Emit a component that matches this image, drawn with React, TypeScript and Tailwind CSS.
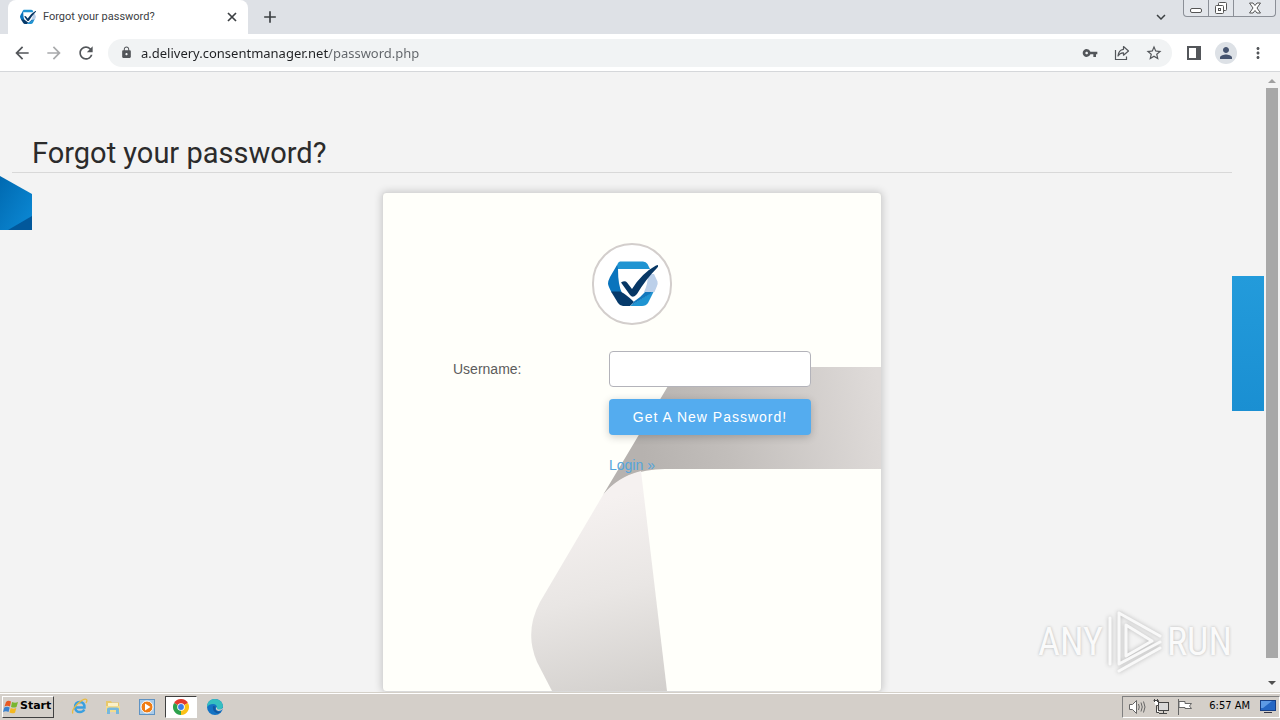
import { ReactNode } from "react";
import {
  MdArrowBack,
  MdArrowForward,
  MdRefresh,
  MdLock,
  MdVpnKey,
  MdStarBorder,
  MdMoreVert,
  MdAdd,
  MdPerson,
  MdKeyboardArrowDown,
} from "react-icons/md";

function Logo({ className }: { className: string }) {
  return (
    <svg viewBox="0 0 50 46" className={className} aria-hidden="true">
      <path d="M12 0.500H35Q38 0.500 39.500 3L42 8H8L9.500 3Q10.500 0.500 12 0.500Z" fill="#1f94d2" />
      <path d="M9 4L10 8Q10 24 14 32L4 32Q0 25 0 22.500Q0 20 2 16Z" fill="#0a74bd" />
      <path d="M3 30.500H12Q18 33 26 41L22 45H15Q12 45 10 42Z" fill="#063a6b" />
      <path d="M46 30L22 45H34Q38 45 40 42Z" fill="#1f94d2" />
      <path d="M23 44.500L26 40.500Q32 37 37 31L47 29L42 33Z" fill="#1378bd" />
      <path d="M40 13L46 13L49.500 20.500Q50 23 49 25L46.500 31L36 31Q40 23 40 13Z" fill="#bcd0ea" />
      <path d="M13 21.500Q17 19 19 21.500L24 28Q34 12 48 4.500L50 4Q51 5 49 7Q38 18 29 33Q25 38 22 34Z" fill="#073765" />
    </svg>
  );
}

function IconButton({ label, className = "", children }: { label: string; className?: string; children: ReactNode }) {
  return (
    <button type="button" aria-label={label} className={`flex h-8 w-8 shrink-0 items-center justify-center text-[#53565a] ${className}`}>
      {children}
    </button>
  );
}

function TabStrip() {
  return (
    <div className="flex h-[34px] shrink-0 items-start bg-[#dee1e6] pl-2">
      <div className="flex h-[34px] w-60 items-center rounded-t-lg bg-white pr-2 pl-3">
        <Logo className="h-4 w-4" />
        <span className="ml-[7px] flex-1 font-['Roboto',sans-serif] text-[11px] whitespace-nowrap text-[#3c4043]">Forgot your password?</span>
        <button type="button" aria-label="Close tab" className="flex h-4 w-4 items-center justify-center text-[#3c4043]">
          <svg width="10" height="10" viewBox="0 0 10 10" stroke="currentColor" strokeWidth="1.700">
            <path d="M1 1L9 9M9 1L1 9" />
          </svg>
        </button>
      </div>
      <button type="button" aria-label="New tab" className="ml-3 flex h-[34px] w-5 items-center justify-center text-[#3c4043]">
        <MdAdd size={20} />
      </button>
      <div className="flex-1" />
      <button type="button" aria-label="Search tabs" className="mr-3 flex h-[34px] w-5 items-center justify-center text-[#3c4043]">
        <MdKeyboardArrowDown size={18} />
      </button>
      <div className="mr-1 flex h-[17px] rounded-b border border-t-0 border-[#8b8f97] bg-[#e3e6eb] text-[#555]">
        <button type="button" aria-label="Minimize" className="flex w-[25px] items-center justify-center border-r border-[#8b8f97]">
          <svg width="12" height="14" viewBox="0 0 12 14" fill="#fff" stroke="currentColor">
            <rect x=".5" y="7.500" width="11" height="4" rx="1.500" />
          </svg>
        </button>
        <button type="button" aria-label="Restore" className="flex w-[25px] items-center justify-center border-r border-[#8b8f97]">
          <svg width="14" height="14" viewBox="0 0 14 14" fill="#fff" stroke="currentColor">
            <rect x="4.500" y="1.500" width="8" height="8" rx="1" />
            <rect x="1.500" y="4.500" width="8" height="8" rx="1" />
            <rect x="4.500" y="7.500" width="2" height="2" />
          </svg>
        </button>
        <button type="button" aria-label="Close" className="flex w-[41px] items-center justify-center">
          <svg width="12" height="12" viewBox="0 0 12 12" fill="#fff" stroke="currentColor">
            <path d="M.5 1H4L6 3.500L8 1H11.500L8 6L11.500 11H8L6 8.500L4 11H.5L4 6Z" />
          </svg>
        </button>
      </div>
    </div>
  );
}

function Toolbar() {
  return (
    <div className="flex h-[38px] shrink-0 items-center border-b border-[#d5d7da] bg-white px-1.5">
      <IconButton label="Back"><MdArrowBack size={20} /></IconButton>
      <IconButton label="Forward" className="opacity-50"><MdArrowForward size={20} /></IconButton>
      <IconButton label="Reload"><MdRefresh size={20} /></IconButton>
      <div className="ml-1.5 flex h-7 flex-1 items-center rounded-full bg-[#f1f3f4] pr-0.5 pl-3">
        <MdLock size={13} className="shrink-0 text-[#53565a]" />
        <input
          aria-label="Address"
          className="ml-2 h-7 min-w-0 flex-1 bg-[linear-gradient(90deg,#202124_187px,#5f6368_187px)] bg-clip-text font-['Noto_Sans',sans-serif] text-[13px] text-transparent outline-none"
          defaultValue="a.delivery.consentmanager.net/password.php"
        />
        <IconButton label="Passwords"><MdVpnKey size={16} /></IconButton>
        <IconButton label="Share">
          <svg width="16" height="16" viewBox="0 0 16 16" fill="none" stroke="currentColor" strokeWidth="1.200">
            <path d="M1.500 5V14.500H12.500V11.500" />
            <path d="M9.500 1.500L14.500 6L9.500 10.200V7.800Q6 7.500 4 11Q4.500 5 9.500 4.300Z" strokeLinejoin="round" />
          </svg>
        </IconButton>
        <IconButton label="Bookmark"><MdStarBorder size={18} /></IconButton>
      </div>
      <IconButton label="Side panel" className="ml-1.5">
        <svg width="16" height="16" viewBox="0 0 16 16">
          <path d="M1 1H15V15H1ZM3 3V13H10V3Z" fill="currentColor" fillRule="evenodd" />
        </svg>
      </IconButton>
      <IconButton label="Profile">
        <span className="flex h-[22px] w-[22px] items-center justify-center rounded-full bg-[#dde1e6] text-[#46546f]">
          <MdPerson size={18} />
        </span>
      </IconButton>
      <IconButton label="Menu"><MdMoreVert size={18} /></IconButton>
    </div>
  );
}

function CardArt() {
  return (
    <svg viewBox="383 193 498 498" className="absolute inset-0 h-full w-full" aria-hidden="true">
      <defs>
        <linearGradient id="band" x1="640" y1="440" x2="881" y2="400" gradientUnits="userSpaceOnUse">
          <stop offset="0" stopColor="#b6b2af" />
          <stop offset=".35" stopColor="#c2bebb" />
          <stop offset="1" stopColor="#dfdbd9" />
        </linearGradient>
        <linearGradient id="leg" x1="600" y1="500" x2="650" y2="700" gradientUnits="userSpaceOnUse">
          <stop offset="0" stopColor="#f5f1f0" />
          <stop offset=".45" stopColor="#e9e6e4" />
          <stop offset="1" stopColor="#d1cecb" />
        </linearGradient>
      </defs>
      <path d="M881 367H700Q679 367 668 386L603 495Q625 469 665 469H881Z" fill="url(#band)" />
      <path d="M641 471Q617 477 603 495L540 602Q524 632 537 662L552 691H667Z" fill="url(#leg)" />
    </svg>
  );
}

function PasswordCard() {
  return (
    <section className="relative mx-auto mt-[19px] h-[500px] w-full max-w-[500px] shrink-0 overflow-hidden rounded border border-[#d9d9d9] bg-[#fffffa] shadow-[0_0_8px_rgba(0,0,0,0.2)]">
      <CardArt />
      <div className="relative flex flex-col px-[70px] pt-[50px]">
        <div className="mx-auto flex h-[82px] w-20 items-center justify-center rounded-full border-2 border-[#d3cecc] bg-white pl-0.5">
          <Logo className="h-[46px] w-[50px]" />
        </div>
        <form className="mt-[26px] grid grid-cols-[156px_1fr] items-center gap-y-3 font-['Liberation_Sans',sans-serif] text-[14px]" onSubmit={(e) => e.preventDefault()}>
          <label htmlFor="username" className="text-[#5c5c5c]">Username:</label>
          <input id="username" className="h-9 w-full rounded border border-[#b3b3ba] bg-white px-2 outline-none" />
          <button type="submit" className="col-start-2 h-9 rounded bg-[#54acef] tracking-[1px] whitespace-nowrap text-white shadow-[0_2px_8px_rgba(0,0,0,0.2)]">
            Get A New Password!
          </button>
          <a href="#login" className="col-start-2 mt-2 leading-5 text-[#54a5dd]">Login »</a>
        </form>
      </div>
    </section>
  );
}

function Watermark() {
  return (
    <div className="absolute right-12 bottom-[18px] flex items-center font-['Roboto_Condensed','Liberation_Sans_Narrow',sans-serif] text-[38px] leading-none text-[#fafafa] [text-shadow:0_0_3px_#b5b5b5]">
      <span>ANY</span>
      <svg width="56" height="64" viewBox="0 0 56 64" fill="none" className="mx-1 drop-shadow-[0_0_2px_#b5b5b5]">
        <path d="M3 8V54" stroke="#fafafa" strokeWidth="3" strokeLinecap="round" />
        <path d="M12 3V54L53 32M12 3L53 26M12 61L53 38M19 15V46L45 31Z" stroke="#f9f9f9" strokeWidth="3" strokeLinecap="round" strokeLinejoin="round" />
      </svg>
      <span>RUN</span>
    </div>
  );
}

function Page() {
  return (
    <div className="flex min-h-0 flex-1 bg-[#f3f3f3]">
      <main className="relative flex min-w-0 flex-1 flex-col overflow-hidden">
        <h1 className="mr-8 ml-3 border-b border-[#d8d8d8] pt-[62px] pl-5 font-['Roboto',sans-serif] text-[29px] leading-[38px] text-[#2b2b2b]">
          Forgot your password?
        </h1>
        <PasswordCard />
        <svg width="32" height="54" viewBox="0 0 32 54" className="absolute top-[104px] left-0" aria-hidden="true">
          <defs>
            <linearGradient id="edge" x1="0" y1="0" x2="1" y2="1">
              <stop offset="0" stopColor="#0069b0" />
              <stop offset="1" stopColor="#0c8ad6" />
            </linearGradient>
          </defs>
          <path d="M0 0L32 18V54H0Z" fill="url(#edge)" />
          <path d="M32 40V54H8Z" fill="#02589b" />
        </svg>
        <div className="absolute top-[204px] right-0 h-[135px] w-8 bg-linear-to-b from-[#239bdb] to-[#1a8fd2]" />
      </main>
      <div className="flex w-4 shrink-0 flex-col items-center bg-[#f3f3f3]">
        <svg width="8" height="16" viewBox="0 0 8 16" className="shrink-0"><path d="M0 11L4 7L8 11Z" fill="#a0a0a0" /></svg>
        <div className="w-3 flex-1 bg-[#a8a8a8]" />
        <svg width="8" height="34" viewBox="0 0 8 34" className="shrink-0"><path d="M0 23L4 27L8 23Z" fill="#505050" /></svg>
      </div>
    </div>
  );
}

function Taskbar() {
  return (
    <footer className="flex h-7 shrink-0 items-center border-t border-[#d4d0c8] bg-[#d4cfc9] font-['DejaVu_Sans_Condensed','DejaVu_Sans',sans-serif] text-[11px] text-black shadow-[inset_0_1px_0_#fff]">
      <button type="button" className="ml-0.5 flex h-[22px] w-[52px] items-center gap-px border border-t-white border-r-[#404040] border-b-[#404040] border-l-white text-[11px] font-bold">
        <svg width="16" height="16" viewBox="0 0 16 16" className="shrink-0">
          <path d="M3 3Q5 1 8 2.500L7 7.500Q4 6 1.500 7.500Z" fill="#e85a23" />
          <path d="M9 3Q12 4.500 15 3L13.500 8Q11 9 8 8Z" fill="#79b62f" />
          <path d="M1.300 8.500Q4 7 6.700 8.500L5.500 13Q3 11.500 0 13Z" fill="#3b82ce" />
          <path d="M7.700 9Q10.500 10.300 13.300 9L12 13.700Q9 15 6.500 13.500Z" fill="#f4b820" />
        </svg>
        <span className="font-['DejaVu_Sans',sans-serif]">Start</span>
      </button>
      <nav className="ml-[9px] flex items-center gap-0.5">
        <button type="button" aria-label="Internet Explorer" className="flex h-[22px] w-8 items-center justify-center">
          <svg width="17" height="17" viewBox="0 0 17 17" fill="none">
            <path d="M4 9.500H13.500Q13.500 4 8.800 4Q4 4.300 4 9.300Q4.500 14 9 14Q12 14 13.300 11.500" stroke="#3aa0e0" strokeWidth="2.400" />
            <path d="M2 15.500Q0 13 6 6.500Q13 0 15.500 1.500Q16.500 2.500 15 5" stroke="#e9bb40" strokeWidth="1.300" />
          </svg>
        </button>
        <button type="button" aria-label="File Explorer" className="flex h-[22px] w-8 items-center justify-center">
          <svg width="16" height="16" viewBox="0 0 16 16">
            <path d="M1 2H6L7 3.500H14V13H1Z" fill="#e8c86a" />
            <path d="M3 4H13V8H3Z" fill="#fbf1c8" />
            <path d="M1 7H15V13H1Z" fill="#f3dc8d" />
            <path d="M2 15V10Q2 8.500 4 8.500H12Q14 8.500 14 10V15H11V11H5V15Z" fill="#76b8dd" />
          </svg>
        </button>
        <button type="button" aria-label="Media Player" className="flex h-[22px] w-8 items-center justify-center">
          <svg width="16" height="16" viewBox="0 0 16 16">
            <rect x=".5" y=".5" width="15" height="15" fill="#a9cbe9" stroke="#5f93c3" />
            <circle cx="8" cy="8" r="6" fill="#f07c13" stroke="#fff" />
            <path d="M6 4.500L11.500 8L6 11.500Z" fill="#fff" />
          </svg>
        </button>
        <button type="button" aria-label="Chrome" className="flex h-[22px] w-8 items-center justify-center border border-t-[#404040] border-r-white border-b-white border-l-[#404040] bg-white">
          <svg width="16" height="16" viewBox="0 0 16 16">
            <path d="M8 8L1.070 4A8 8 0 0 1 14.930 4Z" fill="#e33b2e" />
            <path d="M8 8L14.930 4A8 8 0 0 1 8 16Z" fill="#fbc116" />
            <path d="M8 8V16A8 8 0 0 1 1.070 4Z" fill="#2da14c" />
            <circle cx="8" cy="8" r="3.800" fill="#fff" />
            <circle cx="8" cy="8" r="2.900" fill="#3b7de9" />
          </svg>
        </button>
        <button type="button" aria-label="Edge" className="flex h-[22px] w-8 items-center justify-center">
          <svg width="16" height="16" viewBox="0 0 16 16">
            <circle cx="8" cy="8" r="8" fill="#1473c4" />
            <path d="M0 7Q1 0 8 0Q15 .5 16 7Q15.500 11 11 11Q9 10.500 10 9Q10 5 6 5Q2 5 0 8Z" fill="#35bfc0" />
            <path d="M6 7Q5 12 9.500 14Q12 15 14.500 12.500Q11 13.500 9 11.500Q7.500 10 8.500 7.500Z" fill="#1257a0" />
            <path d="M9 8.500Q8.500 11.500 11.500 12Q14 12 16 10V9Q14 11 11 10.500Q9.500 10 10 8.500Z" fill="#d4cfc9" />
          </svg>
        </button>
      </nav>
      <div className="ml-auto flex h-[22px] items-center border border-t-[#808080] border-r-white border-b-white border-l-[#808080] pr-[3px] pl-1.5">
        <svg width="18" height="16" viewBox="0 0 18 16" fill="none" stroke="#666">
          <path d="M.5 5.500H3.500L7.500 1.500V14.500L3.500 10.500H.5Z" fill="#fff" />
          <path d="M9.500 5Q11 8 9.500 11M12 3.500Q14.500 8 12 12.500M14.500 2.500Q17.500 8 14.500 13.500" />
        </svg>
        <svg width="16" height="16" viewBox="0 0 16 16" fill="#fff" stroke="#444" className="ml-1.5">
          <rect x="5.500" y="3.500" width="10" height="8" fill="#d9d9d9" />
          <path d="M.5 1.500H5.500V6.500H3.500V13.500H6M1.500 0V3M4.500 0V3M6 14.500H14M10.500 12V14" />
        </svg>
        <svg width="16" height="16" viewBox="0 0 16 16" fill="#fff" stroke="#666" className="ml-2">
          <path d="M1.500 0V16M2 2.500H8V4.500H14.500L12.500 7L14.500 9.500H8V8.500H2Z" />
        </svg>
        <span className="ml-4 whitespace-nowrap">6:57 AM</span>
        <svg width="16" height="14" viewBox="0 0 16 14" className="ml-2.5">
          <rect x=".5" y=".5" width="15" height="10" fill="#2567c4" stroke="#173f86" />
          <path d="M1 1H12L3 8H1Z" fill="#5d9ae5" />
          <path d="M4 12.500H12" stroke="#334" />
        </svg>
      </div>
    </footer>
  );
}

export default function App() {
  return (
    <div className="relative flex h-screen flex-col overflow-hidden bg-[#f3f3f3]">
      <TabStrip />
      <Toolbar />
      <div className="relative flex min-h-0 flex-1 flex-col">
        <Page />
        <Watermark />
      </div>
      <Taskbar />
    </div>
  );
}
